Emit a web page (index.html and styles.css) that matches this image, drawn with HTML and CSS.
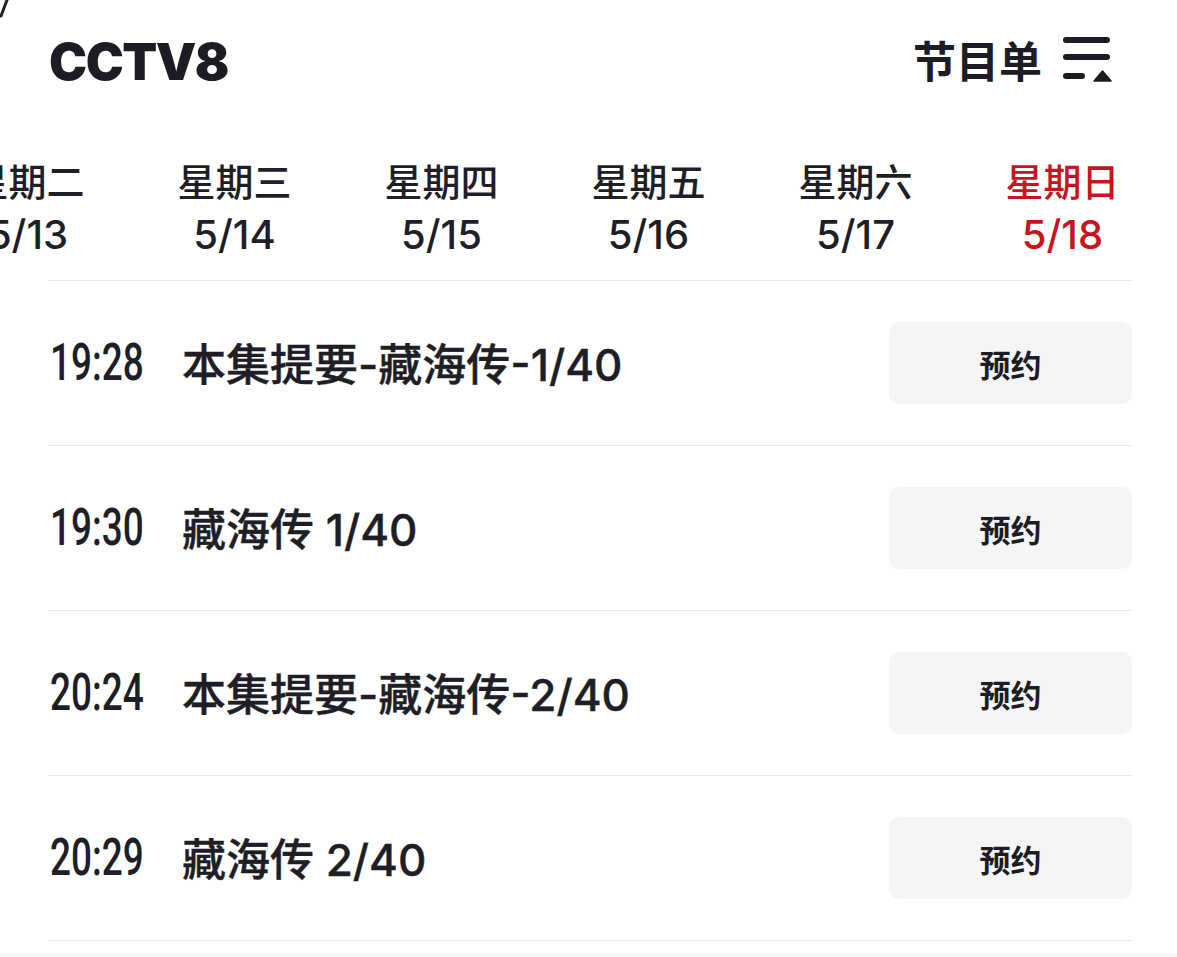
FILE: index.html
```html
<!DOCTYPE html>
<html lang="zh-CN">
<head>
<meta charset="utf-8">
<title>CCTV8 节目单</title>
<link rel="stylesheet" href="styles.css">
</head>
<body>
<svg class="corner" width="10" height="20" viewBox="0 0 10 20"><path d="M7 0 Q4 8 1 16" stroke="#222" stroke-width="3" fill="none" stroke-linecap="round"/></svg>
<div class="page">
  <header class="top">
    <h1 class="logo">CCTV8</h1>
    <div class="menu">
      <span class="menu-text">节目单</span>
      <svg class="menu-icon" width="52" height="50" viewBox="0 0 52 50">
        <rect x="1" y="2" width="47" height="6" rx="3" fill="#1c1c24"/>
        <rect x="1" y="19" width="47" height="6" rx="3" fill="#1c1c24"/>
        <rect x="1" y="38" width="22" height="6" rx="3" fill="#1c1c24"/>
        <path d="M40.5 36 L49 46 L32 46 Z" fill="#1c1c24" stroke="#1c1c24" stroke-width="1.5" stroke-linejoin="round"/>
      </svg>
    </div>
  </header>

  <nav class="days">
    <div class="strip">
      <div class="day"><span class="wd">星期一</span><span class="dt">5/12</span></div>
      <div class="day"><span class="wd">星期二</span><span class="dt">5/13</span></div>
      <div class="day"><span class="wd">星期三</span><span class="dt">5/14</span></div>
      <div class="day"><span class="wd">星期四</span><span class="dt">5/15</span></div>
      <div class="day"><span class="wd">星期五</span><span class="dt">5/16</span></div>
      <div class="day"><span class="wd">星期六</span><span class="dt">5/17</span></div>
      <div class="day active"><span class="wd">星期日</span><span class="dt">5/18</span></div>
    </div>
  </nav>

  <ul class="list">
    <li class="row">
      <span class="time"><span class="tnum">19:28</span></span>
      <span class="name">本集提要-藏海传-1/40</span>
      <button class="book">预约</button>
    </li>
    <li class="row">
      <span class="time"><span class="tnum">19:30</span></span>
      <span class="name">藏海传 1/40</span>
      <button class="book">预约</button>
    </li>
    <li class="row">
      <span class="time"><span class="tnum">20:24</span></span>
      <span class="name">本集提要-藏海传-2/40</span>
      <button class="book">预约</button>
    </li>
    <li class="row">
      <span class="time"><span class="tnum">20:29</span></span>
      <span class="name">藏海传 2/40</span>
      <button class="book">预约</button>
    </li>
  </ul>
</div>
</body>
</html>
```

FILE: styles.css
```css
html {
  background: #f8f8f8;
}
body {
  margin: 0;
  background: #f8f8f8;
  color: #1e1e26;
  font-family: "Noto Sans CJK SC", "Noto Sans", sans-serif;
  overflow: hidden;
}
.corner {
  position: absolute;
  left: 0;
  top: 0;
}
.page {
  background: #fff;
  padding: 0 45px 12px 48px;
}
.top {
  display: flex;
  align-items: center;
  justify-content: space-between;
  height: 124px;
}
.logo {
  margin: -2px 0 0 1px;
  font-family: Inter, "Liberation Sans", sans-serif;
  font-weight: 900;
  font-size: 51px;
  line-height: 1;
  letter-spacing: -1.5px;
  color: #1c1c24;
}
.menu {
  display: flex;
  align-items: center;
  gap: 20px;
  margin-right: 18px;
  margin-top: -6px;
}
.menu-text {
  font-size: 43px;
  font-weight: 700;
  line-height: 1;
  color: #1c1c24;
}
.menu-icon {
  display: block;
  margin-top: 2px;
}
.days {
  margin: 0 -45px 0 -48px;
  overflow: hidden;
  padding: 34px 0 23px;
}
.strip {
  display: flex;
  margin-left: -283px;
}
.day {
  flex: 0 0 207px;
  display: flex;
  flex-direction: column;
  align-items: center;
  gap: 11px;
}
.wd {
  font-size: 38px;
  font-weight: 500;
  line-height: 44px;
  color: #1e1e26;
}
.dt {
  font-family: Inter, "Liberation Sans", sans-serif;
  font-size: 40px;
  font-weight: 500;
  line-height: 44px;
  color: #1e1e26;
}
.day.active .wd,
.day.active .dt {
  color: #c8141e;
}
.list {
  list-style: none;
  margin: 0;
  padding: 0;
  border-bottom: 1px solid #e6e6e6;
}
.row {
  display: flex;
  align-items: center;
  height: 164px;
  border-top: 1px solid #e6e6e6;
}
.time {
  flex: 0 0 130px;
  padding-left: 2px;
}
.tnum {
  display: inline-block;
  font-family: Roboto, "Liberation Sans", sans-serif;
  font-size: 52px;
  font-weight: 500;
  line-height: 1;
  color: #1e1e26;
  transform: scaleX(0.71);
  transform-origin: left center;
}
.name {
  flex: 1;
  font-family: Inter, "Noto Sans CJK SC", sans-serif;
  font-size: 44px;
  font-weight: 500;
  line-height: 1;
  color: #1e1e26;
  margin-top: 4px;
  -webkit-text-stroke: 0.4px #1e1e26;
}
.book {
  flex: 0 0 243px;
  height: 82px;
  border: none;
  border-radius: 10px;
  background: #f5f5f6;
  font-family: "Noto Sans CJK SC", sans-serif;
  font-size: 31px;
  font-weight: 700;
  color: #1c1c24;
  padding: 0;
}
```
